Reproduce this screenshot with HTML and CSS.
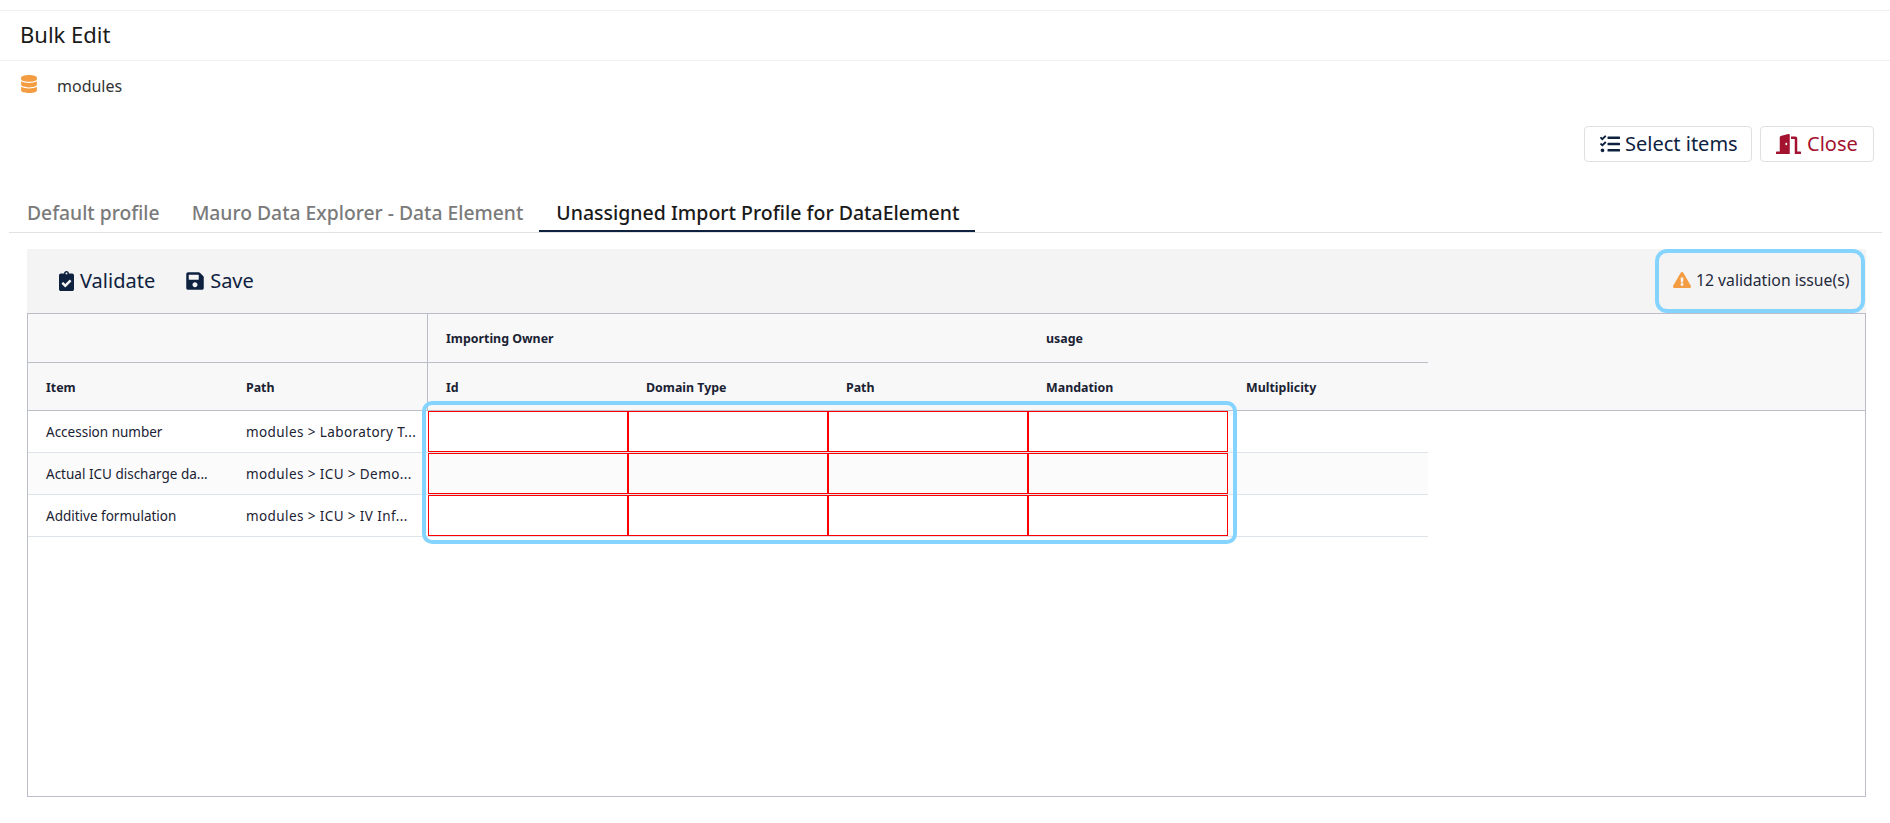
FILE: index.html
```html
<!DOCTYPE html>
<html lang="en">
<head>
<meta charset="utf-8">
<title>Bulk Edit</title>
<link rel="stylesheet" href="styles.css">
</head>
<body>
<div class="page">
  <header class="title-bar"><h1 class="title">Bulk Edit</h1></header>
  <div class="meta">
    <svg class="icon-db" viewBox="0 0 448 512"><path fill="currentColor" d="M448 73.143v45.714C448 159.143 347.667 192 224 192S0 159.143 0 118.857V73.143C0 32.857 100.333 0 224 0s224 32.857 224 73.143zM448 176v102.857C448 319.143 347.667 352 224 352S0 319.143 0 278.857V176c48.125 33.143 136.208 48.572 224 48.572S399.874 209.143 448 176zm0 160v102.857C448 479.143 347.667 512 224 512S0 479.143 0 438.857V336c48.125 33.143 136.208 48.572 224 48.572S399.874 369.143 448 336z"/></svg>
    <span class="meta-label">modules</span>
  </div>
  <div class="actions">
    <button class="btn btn-primary" type="button">
      <svg class="icon-tasks" viewBox="0 0 512 512"><path fill="currentColor" d="M139.61 35.5a12 12 0 0 0-17 0L58.93 98.81l-22.7-22.12a12 12 0 0 0-17 0L3.53 92.41a12 12 0 0 0 0 17l47.59 47.4a12.78 12.78 0 0 0 17.61 0l15.59-15.62L156.52 69a12.09 12.09 0 0 0 .09-17zm0 159.19a12 12 0 0 0-17 0l-63.68 63.72-22.7-22.1a12 12 0 0 0-17 0L3.53 252a12 12 0 0 0 0 17L51 316.5a12.77 12.77 0 0 0 17.6 0l15.7-15.69 72.2-72.22a12 12 0 0 0 .09-16.9zM64 368c-26.49 0-48.59 21.5-48.59 48S37.53 464 64 464a48 48 0 0 0 0-96zm432 16H208a16 16 0 0 0-16 16v32a16 16 0 0 0 16 16h288a16 16 0 0 0 16-16v-32a16 16 0 0 0-16-16zm0-320H208a16 16 0 0 0-16 16v32a16 16 0 0 0 16 16h288a16 16 0 0 0 16-16V80a16 16 0 0 0-16-16zm0 160H208a16 16 0 0 0-16 16v32a16 16 0 0 0 16 16h288a16 16 0 0 0 16-16v-32a16 16 0 0 0-16-16z"/></svg>
      Select items
    </button>
    <button class="btn btn-close" type="button">
      <svg class="icon-door" viewBox="0 0 640 512"><path fill="currentColor" d="M624 448h-80V113.45C544 86.19 522.47 64 496 64H384v64h96v384h144c8.84 0 16-7.16 16-16v-32c0-8.84-7.16-16-16-16zM312.24 1.01l-192 49.74C105.99 54.44 96 67.7 96 82.92V448H16c-8.84 0-16 7.16-16 16v32c0 8.84 7.16 16 16 16h336V33.18c0-21.58-19.56-37.41-39.76-32.17zM264 288c-13.25 0-24-14.33-24-32 0-17.67 10.75-32 24-32s24 14.33 24 32c0 17.67-10.75 32-24 32z"/></svg>
      Close
    </button>
  </div>
  <nav class="tabs">
    <a class="tab">Default profile</a>
    <a class="tab">Mauro Data Explorer - Data Element</a>
    <a class="tab tab-active">Unassigned Import Profile for DataElement</a>
  </nav>
  <section class="panel">
    <div class="toolbar">
      <div class="toolbar-actions">
        <button class="tool" type="button">
          <svg class="icon-clip" viewBox="0 0 384 512"><path fill="currentColor" d="M336 64h-80c0-35.3-28.7-64-64-64s-64 28.7-64 64H48C21.5 64 0 85.5 0 112v352c0 26.5 21.5 48 48 48h288c26.5 0 48-21.5 48-48V112c0-26.5-21.5-48-48-48zM192 40c13.3 0 24 10.7 24 24s-10.7 24-24 24-24-10.7-24-24 10.7-24 24-24zm121.2 231.8l-143 141.8c-4.7 4.7-12.3 4.6-17-.1l-82.6-83.3c-4.7-4.7-4.6-12.3.1-17L99.1 285c4.7-4.7 12.3-4.6 17 .1l46 46.4 106-105.2c4.7-4.7 12.3-4.6 17 .1l28.2 28.4c4.7 4.8 4.6 12.3-.1 17z"/></svg>
          Validate
        </button>
        <button class="tool" type="button">
          <svg class="icon-save" viewBox="0 0 448 512"><path fill="currentColor" d="M433.941 129.941l-83.882-83.882A48 48 0 0 0 316.118 32H48C21.49 32 0 53.49 0 80v352c0 26.51 21.49 48 48 48h352c26.51 0 48-21.49 48-48V163.882a48 48 0 0 0-14.059-33.941zM224 416c-35.346 0-64-28.654-64-64 0-35.346 28.654-64 64-64s64 28.654 64 64c0 35.346-28.654 64-64 64zm96-304.52V212c0 6.627-5.373 12-12 12H76c-6.627 0-12-5.373-12-12V108c0-6.627 5.373-12 12-12h228.52c3.183 0 6.235 1.264 8.485 3.515l3.48 3.48A11.996 11.996 0 0 1 320 111.48z"/></svg>
          Save
        </button>
      </div>
      <div class="issues">
        <svg class="icon-warn" viewBox="0 0 576 512"><path fill="currentColor" d="M569.517 440.013C587.975 472.007 564.806 512 527.94 512H48.054c-36.937 0-59.999-40.055-41.577-71.987L246.423 23.985c18.467-32.009 64.72-31.951 83.154 0l239.94 416.028zM288 354c-25.405 0-46 20.595-46 46s20.595 46 46 46 46-20.595 46-46-20.595-46-46-46zm-43.673-165.346l7.418 136c.347 6.364 5.609 11.346 11.982 11.346h48.546c6.373 0 11.635-4.982 11.982-11.346l7.418-136c.375-6.874-5.098-12.654-11.982-12.654h-63.383c-6.884 0-12.356 5.78-11.981 12.654z"/></svg>
        <span>12 validation issue(s)</span>
      </div>
    </div>
    <div class="grid-box">
      <table class="grid">
        <colgroup>
          <col class="col"><col class="col"><col class="col"><col class="col"><col class="col"><col class="col"><col class="col"><col>
        </colgroup>
        <thead>
          <tr class="head-groups">
            <th colspan="2" class="sep"></th>
            <th colspan="3">Importing Owner</th>
            <th colspan="2">usage</th>
            <th rowspan="2" class="filler-head"></th>
          </tr>
          <tr class="head-cols">
            <th>Item</th>
            <th class="sep">Path</th>
            <th>Id</th>
            <th>Domain Type</th>
            <th>Path</th>
            <th>Mandation</th>
            <th>Multiplicity</th>
          </tr>
        </thead>
        <tbody>
          <tr>
            <td>Accession number</td>
            <td class="path">modules &gt; Laboratory T...</td>
            <td class="invalid"></td><td class="invalid"></td><td class="invalid"></td><td class="invalid"></td>
            <td></td>
            <td class="filler"></td>
          </tr>
          <tr class="alt">
            <td>Actual ICU discharge da...</td>
            <td class="path">modules &gt; ICU &gt; Demo...</td>
            <td class="invalid"></td><td class="invalid"></td><td class="invalid"></td><td class="invalid"></td>
            <td></td>
            <td class="filler"></td>
          </tr>
          <tr>
            <td>Additive formulation</td>
            <td class="path">modules &gt; ICU &gt; IV Inf...</td>
            <td class="invalid"></td><td class="invalid"></td><td class="invalid"></td><td class="invalid"></td>
            <td></td>
            <td class="filler"></td>
          </tr>
        </tbody>
      </table>
      <div class="highlight"></div>
    </div>
  </section>
</div>
</body>
</html>
```

FILE: styles.css
```css
* { box-sizing: border-box; }

html, body {
  margin: 0;
  height: 100%;
  background: #fff;
}

body {
  font-family: "Noto Sans", "Open Sans", sans-serif;
  color: #0e2240;
  overflow: hidden;
}

.page {
  padding-top: 10px;
}

.title-bar {
  height: 51px;
  border-top: 1px solid #f1f1f1;
  border-bottom: 1px solid #f1f1f1;
  padding: 0 0 3px 20px;
  display: flex;
  align-items: center;
}

.title {
  margin: 0;
  font-size: 22px;
  font-weight: 400;
  color: #1a1a1a;
}

.meta {
  height: 65px;
  padding-left: 21px;
  display: flex;
  align-items: flex-start;
}

.icon-db {
  width: 16px;
  height: 18px;
  margin-top: 14px;
  color: #f49c41;
}

.meta-label {
  margin-left: 20px;
  margin-top: 14px;
  font-size: 16px;
  line-height: 22px;
  color: #333;
}

.actions {
  height: 36px;
  display: flex;
  justify-content: flex-end;
  gap: 8px;
  padding-right: 16px;
}

.btn {
  height: 36px;
  display: flex;
  align-items: center;
  gap: 5px;
  padding: 0 0 2px 15px;
  background: #fff;
  border: 1px solid #e0e0e0;
  border-radius: 4px;
  font: inherit;
  font-size: 20px;
  white-space: nowrap;
}

.btn-primary { color: #0e2240; width: 168px; }
.btn-close { color: #a3122e; width: 114px; gap: 6px; }

.icon-tasks { flex: none; width: 20px; height: 20px; margin-top: 2px; }
.icon-door { flex: none; width: 25px; height: 20px; margin-top: 2px; }

.tabs {
  margin: 30px 8px 0 9px;
  height: 41px;
  display: flex;
  padding-left: 2px;
  border-bottom: 1px solid #e2e2e2;
}

.tab {
  height: 40px;
  padding: 0 16px;
  display: flex;
  align-items: center;
  font-size: 19.3px;
  font-weight: 500;
  color: #7a7a7a;
}

.tab-active {
  color: #1a1a1a;
  font-size: 19.5px;
  padding: 2px 16px 0 17px;
  border-bottom: 2px solid #0e2240;
}

.panel {
  margin: 16px 24px 0 27px;
}

.toolbar {
  height: 64px;
  background: #f4f4f4;
  display: flex;
  justify-content: space-between;
}

.toolbar-actions {
  display: flex;
  align-items: center;
  gap: 31px;
  padding-left: 32px;
}

.tool {
  display: flex;
  align-items: center;
  gap: 6px;
  padding: 0 0 2px;
  border: 0;
  background: none;
  font: inherit;
  font-size: 20px;
  color: #0e2240;
}

.icon-clip { width: 15px; height: 20px; margin-top: 2px; }
.icon-save { width: 18px; height: 20px; margin-top: 2px; }

.issues {
  width: 210px;
  height: 64px;
  margin-right: 1px;
  padding: 0 0 2px 14px;
  border: 4px solid #85d4ff;
  border-radius: 12px;
  display: flex;
  align-items: center;
  gap: 5px;
  font-size: 15.75px;
  color: #1f2a3c;
}

.icon-warn { width: 18px; height: 16px; color: #f49c41; }

.grid-box {
  position: relative;
  height: 484px;
  border: 1px solid #bbbdc9;
}

.grid {
  width: 100%;
  table-layout: fixed;
  border-collapse: separate;
  border-spacing: 0;
  font-size: 13.5px;
  color: #1a2233;
}

.col { width: 200px; }

th, td {
  padding: 0 18px;
  text-align: left;
  white-space: nowrap;
  overflow: hidden;
}

th {
  background: #f8f8f8;
  font-size: 12.4px;
  font-weight: 700;
  border-bottom: 1px solid #bbbdc9;
}

.head-groups th { height: 49px; }
.head-cols th { height: 48px; padding-top: 1px; }

th.sep { border-right: 1px solid #bbbdc9; }

td {
  height: 42px;
  border-bottom: 1px solid #dfe3ea;
}

td.path { letter-spacing: 0.4px; }

.alt td { background: #fbfbfb; }

td.filler,
.alt td.filler {
  background: none;
  border-bottom: 0;
}

td.invalid { box-shadow: inset 0 0 0 1px #f00; }

.highlight {
  position: absolute;
  left: 394px;
  top: 87px;
  width: 815px;
  height: 143px;
  border: 4px solid #85d4ff;
  border-radius: 10px;
  pointer-events: none;
}
```
